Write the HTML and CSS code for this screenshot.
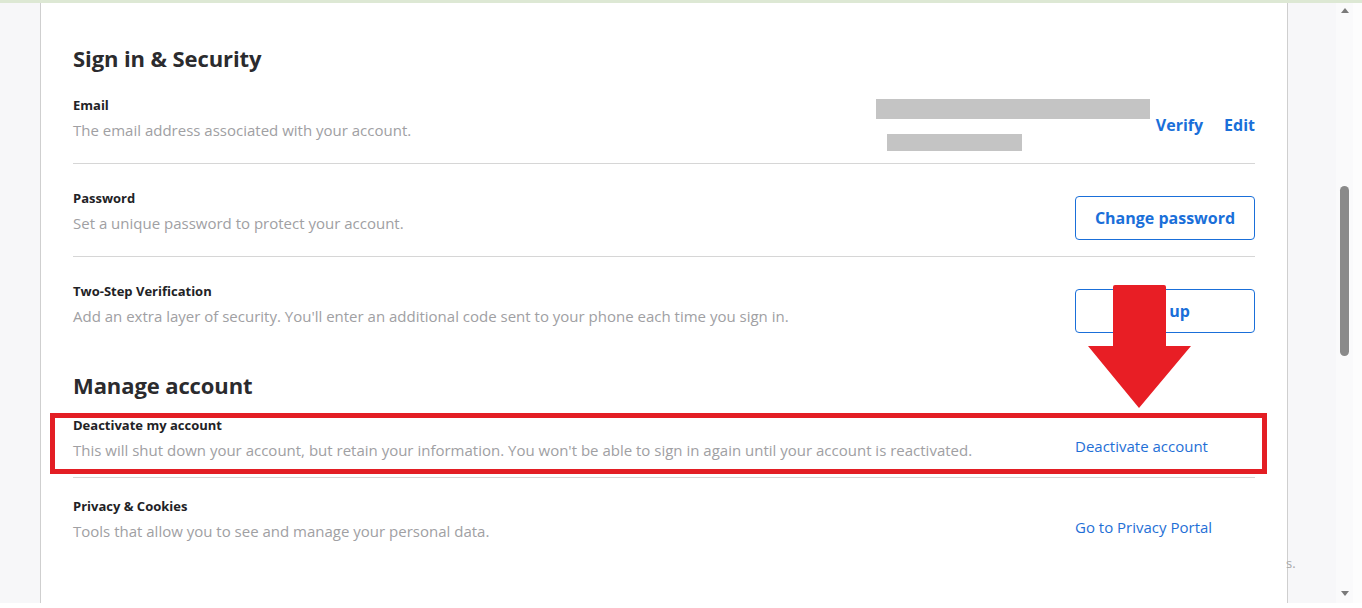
FILE: index.html
```html
<!DOCTYPE html>
<html lang="en">
<head>
<meta charset="utf-8">
<title>Account settings</title>
<link rel="stylesheet" href="styles.css">
</head>
<body>
<div class="topbar"></div>
<div class="page">
  <aside class="gutter-left"></aside>
  <main class="card">
    <section class="section">
      <h2 class="section-title">Sign in &amp; Security</h2>
      <div class="row row-first row-divided">
        <div class="info">
          <div class="label">Email</div>
          <div class="desc">The email address associated with your account.</div>
        </div>
        <div class="email-actions">
          <div class="redacted">
            <span class="bar bar-long"></span>
            <span class="bar bar-short"></span>
          </div>
          <a class="link-bold link-verify">Verify</a>
          <a class="link-bold link-edit">Edit</a>
        </div>
      </div>
      <div class="row row-divided">
        <div class="info">
          <div class="label">Password</div>
          <div class="desc">Set a unique password to protect your account.</div>
        </div>
        <div class="action">
          <button class="btn">Change password</button>
        </div>
      </div>
      <div class="row">
        <div class="info">
          <div class="label">Two-Step Verification</div>
          <div class="desc">Add an extra layer of security. You'll enter an additional code sent to your phone each time you sign in.</div>
        </div>
        <div class="action">
          <button class="btn">Set up</button>
        </div>
      </div>
    </section>
    <section class="section section-manage">
      <h2 class="section-title">Manage account</h2>
      <div class="row row-compact row-divided">
        <div class="info">
          <div class="label">Deactivate my account</div>
          <div class="desc">This will shut down your account, but retain your information. You won't be able to sign in again until your account is reactivated.</div>
        </div>
        <div class="action">
          <a class="link">Deactivate account</a>
        </div>
      </div>
      <div class="row row-compact row-last">
        <div class="info">
          <div class="label">Privacy &amp; Cookies</div>
          <div class="desc">Tools that allow you to see and manage your personal data.</div>
        </div>
        <div class="action">
          <a class="link">Go to Privacy Portal</a>
        </div>
      </div>
    </section>
  </main>
  <aside class="gutter-right">
    <div class="gutter-text">s.</div>
    <div class="scrollbar">
      <span class="arrow-up"></span>
      <span class="thumb"></span>
      <span class="arrow-down"></span>
    </div>
    <div class="gutter-edge"></div>
  </aside>
</div>
<div class="annot-box"></div>
<svg class="annot-arrow" width="1362" height="608" viewBox="0 0 1362 608" aria-hidden="true">
  <path d="M1115 285 H1164 Q1166 285 1166 287 V346 H1191 L1139 408 L1088 346 H1113 V287 Q1113 285 1115 285 Z" fill="#e81e25"/>
</svg>
</body>
</html>
```

FILE: styles.css
```css
* { box-sizing: border-box; }

html, body {
  margin: 0;
  padding: 0;
  background: #ffffff;
  font-family: "Open Sans", "Liberation Sans", Arial, sans-serif;
  overflow: hidden;
}

body {
  width: 1362px;
  height: 608px;
  position: relative;
}

.topbar {
  height: 3px;
  background: #dde8d4;
}

.page {
  display: flex;
  height: 600px;
  overflow: hidden;
}

.gutter-left {
  width: 40px;
  flex: none;
  background: #f7f7f9;
}

.card {
  width: 1248px;
  flex: none;
  background: #ffffff;
  border-left: 1px solid #cfcfcf;
  border-right: 1px solid #cfcfcf;
  padding: 41px 32px 0 32px;
}

.section-title {
  margin: 0;
  font-size: 22px;
  line-height: 29px;
  font-weight: 700;
  color: #2b2b2e;
  letter-spacing: -0.1px;
}

.section-manage .section-title {
  margin-top: 22px;
}

.row {
  display: flex;
  justify-content: space-between;
  align-items: flex-start;
  padding: 25px 0 22px;
}

.row-first {
  padding-top: 23px;
}

.row-compact {
  padding: 16px 0;
}

.row-last {
  padding-top: 19px;
}

.row-divided {
  border-bottom: 1px solid #d6d6d6;
}

.info {
  display: flex;
  flex-direction: column;
  gap: 5px;
}

.label {
  font-size: 13px;
  line-height: 18px;
  font-weight: 700;
  color: #222225;
}

.desc {
  font-size: 15px;
  line-height: 22px;
  color: #a0a0a3;
}

.action {
  width: 180px;
  height: 44px;
  flex: none;
}

.btn {
  display: block;
  width: 180px;
  height: 44px;
  margin-top: 7px;
  padding: 0;
  background: #ffffff;
  border: 1px solid #1a6fd9;
  border-radius: 4px;
  color: #1a6fd9;
  font-family: inherit;
  font-size: 16px;
  font-weight: 700;
  line-height: 22px;
  cursor: pointer;
}

.link {
  display: block;
  margin-top: 19px;
  font-size: 15px;
  line-height: 22px;
  color: #1f6fd6;
  text-decoration: none;
}

.email-actions {
  display: flex;
  align-items: flex-start;
  height: 44px;
}

.redacted {
  display: flex;
  flex-direction: column;
  align-items: flex-start;
}

.bar {
  display: block;
  background: #c4c4c4;
}

.bar-long {
  width: 274px;
  height: 20px;
  margin-top: 3px;
}

.bar-short {
  width: 135px;
  height: 17px;
  margin-top: 15px;
  margin-left: 11px;
}

.link-bold {
  font-size: 16px;
  line-height: 22px;
  font-weight: 700;
  color: #1a6fd9;
  text-decoration: none;
  margin-top: 18px;
}

.link-verify { margin-left: 6px; }
.link-edit { margin-left: 21px; }

.gutter-right {
  flex: 1;
  display: flex;
  background: #f7f7f9;
}

.gutter-text {
  width: 50px;
  flex: none;
  padding-top: 551px;
  font-size: 13px;
  line-height: 18px;
  color: #a8a8aa;
  margin-left: -2px;
}

.scrollbar {
  width: 17px;
  flex: none;
  background: #fafafb;
  display: flex;
  flex-direction: column;
  align-items: center;
  padding-top: 5px;
}

.arrow-up {
  width: 0;
  height: 0;
  border-left: 4.5px solid transparent;
  border-right: 4.5px solid transparent;
  border-bottom: 5px solid #7a7a7a;
}

.thumb {
  width: 9px;
  height: 170px;
  margin-top: 173px;
  border-radius: 5px;
  background: #8a8a8a;
}

.arrow-down {
  width: 0;
  height: 0;
  margin-top: auto;
  margin-bottom: 7px;
  border-left: 4.5px solid transparent;
  border-right: 4.5px solid transparent;
  border-top: 5px solid #7a7a7a;
}

.gutter-edge {
  flex: 1;
  background: #fdfdfd;
}

.annot-box {
  position: absolute;
  left: 50px;
  top: 413px;
  width: 1217px;
  height: 61px;
  border: 5px solid #e31e24;
  pointer-events: none;
}

.annot-arrow {
  position: absolute;
  left: 0;
  top: 0;
  pointer-events: none;
}
```
